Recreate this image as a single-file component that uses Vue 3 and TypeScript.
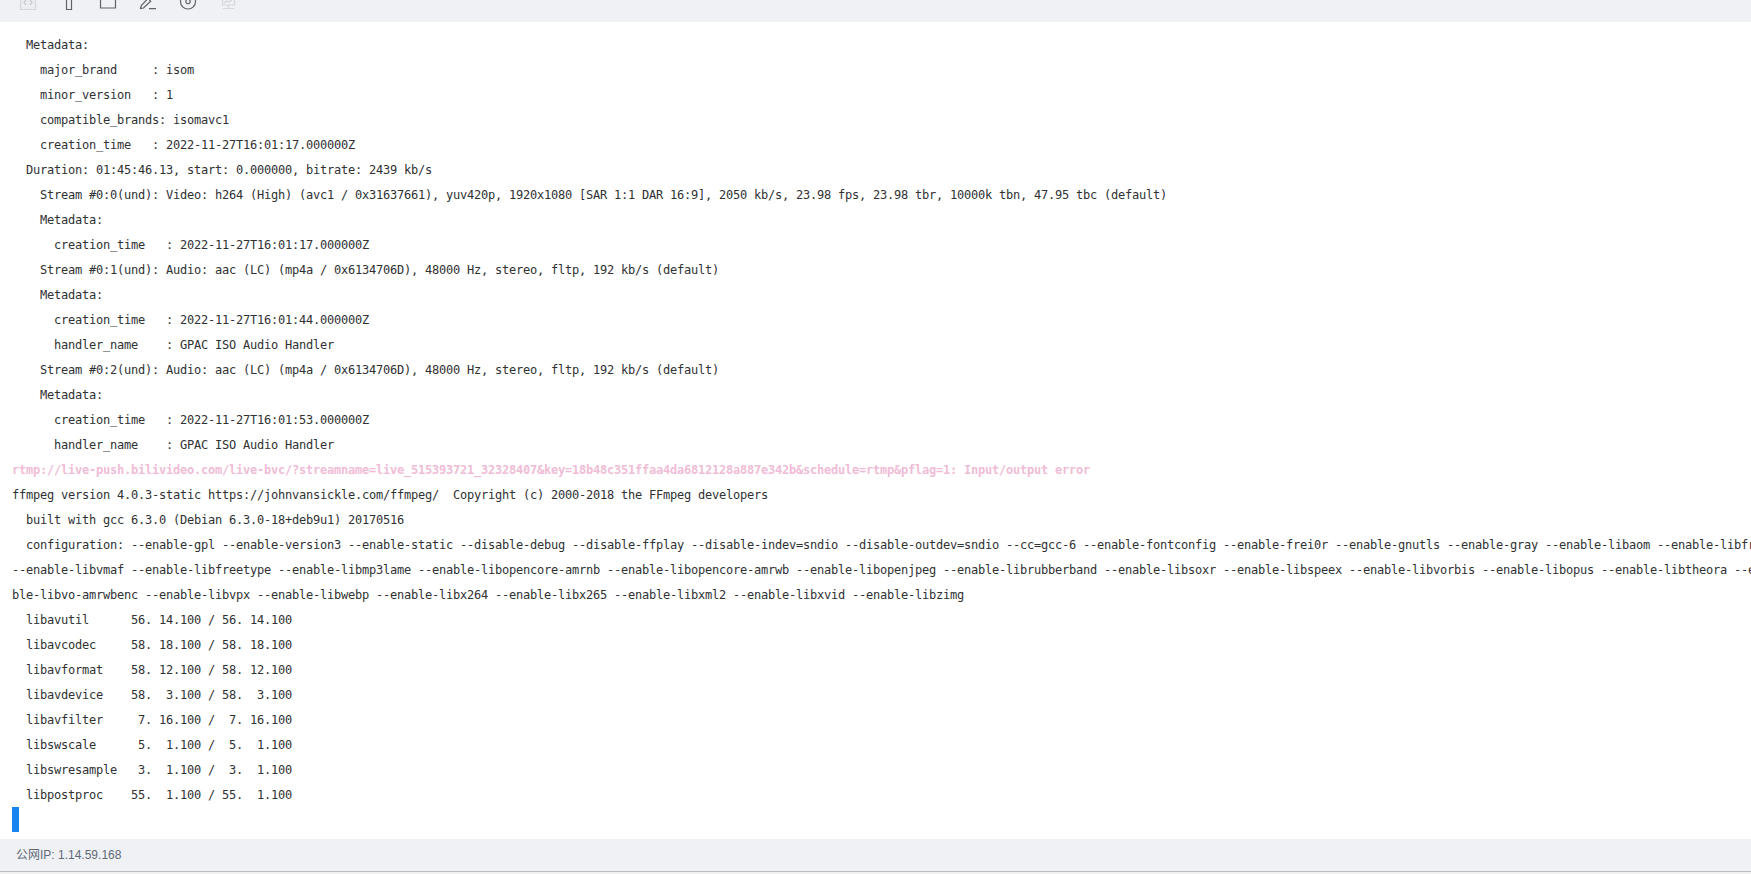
<script setup lang="ts">
const before: string[] = [
  '  Metadata:',
  '    major_brand     : isom',
  '    minor_version   : 1',
  '    compatible_brands: isomavc1',
  '    creation_time   : 2022-11-27T16:01:17.000000Z',
  '  Duration: 01:45:46.13, start: 0.000000, bitrate: 2439 kb/s',
  '    Stream #0:0(und): Video: h264 (High) (avc1 / 0x31637661), yuv420p, 1920x1080 [SAR 1:1 DAR 16:9], 2050 kb/s, 23.98 fps, 23.98 tbr, 10000k tbn, 47.95 tbc (default)',
  '    Metadata:',
  '      creation_time   : 2022-11-27T16:01:17.000000Z',
  '    Stream #0:1(und): Audio: aac (LC) (mp4a / 0x6134706D), 48000 Hz, stereo, fltp, 192 kb/s (default)',
  '    Metadata:',
  '      creation_time   : 2022-11-27T16:01:44.000000Z',
  '      handler_name    : GPAC ISO Audio Handler',
  '    Stream #0:2(und): Audio: aac (LC) (mp4a / 0x6134706D), 48000 Hz, stereo, fltp, 192 kb/s (default)',
  '    Metadata:',
  '      creation_time   : 2022-11-27T16:01:53.000000Z',
  '      handler_name    : GPAC ISO Audio Handler',
]
const errorLine =
  'rtmp://live-push.bilivideo.com/live-bvc/?streamname=live_515393721_32328407&key=18b48c351ffaa4da6812128a887e342b&schedule=rtmp&pflag=1: Input/output error'
const after: string[] = [
  'ffmpeg version 4.0.3-static https://johnvansickle.com/ffmpeg/  Copyright (c) 2000-2018 the FFmpeg developers',
  '  built with gcc 6.3.0 (Debian 6.3.0-18+deb9u1) 20170516',
  '  configuration: --enable-gpl --enable-version3 --enable-static --disable-debug --disable-ffplay --disable-indev=sndio --disable-outdev=sndio --cc=gcc-6 --enable-fontconfig --enable-frei0r --enable-gnutls --enable-gray --enable-libaom --enable-libfr',
  '--enable-libvmaf --enable-libfreetype --enable-libmp3lame --enable-libopencore-amrnb --enable-libopencore-amrwb --enable-libopenjpeg --enable-librubberband --enable-libsoxr --enable-libspeex --enable-libvorbis --enable-libopus --enable-libtheora --e',
  'ble-libvo-amrwbenc --enable-libvpx --enable-libwebp --enable-libx264 --enable-libx265 --enable-libxml2 --enable-libxvid --enable-libzimg',
  '  libavutil      56. 14.100 / 56. 14.100',
  '  libavcodec     58. 18.100 / 58. 18.100',
  '  libavformat    58. 12.100 / 58. 12.100',
  '  libavdevice    58.  3.100 / 58.  3.100',
  '  libavfilter     7. 16.100 /  7. 16.100',
  '  libswscale      5.  1.100 /  5.  1.100',
  '  libswresample   3.  1.100 /  3.  1.100',
  '  libpostproc    55.  1.100 / 55.  1.100',
]
</script>

<template>
  <div class="page">
    <div class="toolbar">
      <svg width="18" height="16" viewBox="0 0 18 16" fill="#ecedf1" stroke="#d5d7db" stroke-width="1.2"><path d="M1.500 -4h15v13.500h-15z" /><path fill="none" stroke="#c4c6cc" d="M7 0L5 2.500l2 2.500M11 0l2 2.500-2 2.500" /></svg>
      <svg width="18" height="16" viewBox="0 0 18 16" fill="none" stroke="#606266" stroke-width="1.2"><path d="M7.500 -2v11.500h5V-2" /></svg>
      <svg width="18" height="16" viewBox="0 0 18 16" fill="none" stroke="#606266" stroke-width="1.200"><path d="M1.500 -2v10h15V-2" /></svg>
      <svg width="18" height="16" viewBox="0 0 18 16" fill="none" stroke="#606266" stroke-width="1.200"><path d="M1.500 8.500l.8-3L9-1.500l2.700 2.700L4.500 8zM10 8.600h7" /></svg>
      <svg width="18" height="16" viewBox="0 0 18 16" fill="none" stroke="#606266" stroke-width="1.200"><circle cx="9" cy="1.500" r="7.500" /><circle cx="9" cy="1.500" r="2.200" /></svg>
      <svg width="18" height="16" viewBox="0 0 18 16" fill="none" stroke="#d5d7db" stroke-width="1.200"><path d="M3.500 -4h12v9h-12zM9.500 5v3M4 8.500h11M5 3l3-2 2 1 3-2" /></svg>
    </div>
    <div class="log">
      <pre v-for="(l, i) in before" :key="'b' + i" class="line">{{ l }}</pre>
      <pre class="line err">{{ errorLine }}</pre>
      <pre v-for="(l, i) in after" :key="'a' + i" class="line">{{ l }}</pre>
      <div class="cursor"></div>
    </div>
    <div class="footer">公网IP: 1.14.59.168</div>
  </div>
</template>

<style>
html, body { margin: 0; padding: 0; background: #fff; overflow: hidden; }
</style>

<style scoped>
.page {
  width: 1751px;
  height: 874px;
  display: flex;
  flex-direction: column;
  overflow: hidden;
  background: #f1f1f1;
}
.toolbar {
  height: 22px;
  flex: none;
  background: #f0f1f5;
  display: flex;
  align-items: flex-start;
  gap: 22px;
  padding-left: 19px;
}
.log {
  flex: 1;
  padding: 11px 0 0 12px;
  overflow: hidden;
  background: #fff;
  font-family: "DejaVu Sans Mono", monospace;
}
.line {
  margin: 0;
  height: 25px;
  line-height: 25px;
  font-family: inherit;
  font-size: 12px;
  letter-spacing: -0.225px;
  color: #303133;
  white-space: pre;
}
.err {
  color: #f0bcd6;
  font-weight: 700;
}
.cursor {
  width: 7px;
  height: 25px;
  margin-top: -1px;
  background: #1a84ee;
}
.footer {
  flex: none;
  height: 32px;
  padding-left: 16px;
  margin-bottom: 2px;
  background: #f0f1f5;
  border-bottom: 1px solid #bdbdbd;
  font-family: "Liberation Sans", "Noto Sans CJK SC", sans-serif;
  font-size: 12px;
  line-height: 32px;
  color: #606a78;
}
</style>
